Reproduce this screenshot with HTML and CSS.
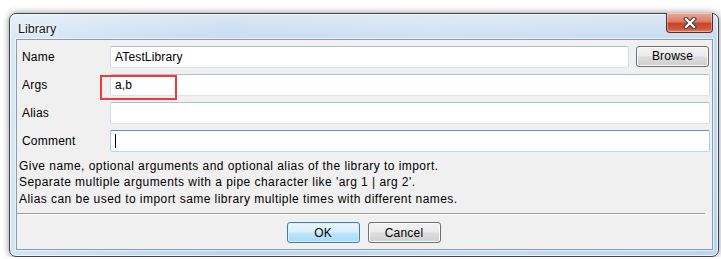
FILE: index.html
```html
<!DOCTYPE html>
<html lang="en">
<head>
    <meta charset="UTF-8">
    <title>Library</title>
    <link rel="stylesheet" href="styles.css">
</head>
<body>
    <div class="window">
        <div class="titlebar">
            <span class="title">Library</span>
            <span class="close">
                <svg width="14" height="12" viewBox="0 0 14 12">
                    <path d="M3 2 L11 10 M11 2 L3 10" stroke="#3a3f48" stroke-width="4.2" stroke-linecap="square" fill="none"/>
                    <path d="M3 2 L11 10 M11 2 L3 10" stroke="#ffffff" stroke-width="2.2" stroke-linecap="square" fill="none"/>
                </svg>
            </span>
        </div>
        <div class="client">
            <div class="form">
                <span class="label">Name</span>
                <div class="field">
                    <div class="textbox">ATestLibrary</div>
                    <span class="btn browse">Browse</span>
                </div>
                <span class="label">Args</span>
                <div class="field">
                    <div class="textbox">a,b</div>
                    <span class="mark"></span>
                </div>
                <span class="label">Alias</span>
                <div class="field">
                    <div class="textbox"></div>
                </div>
                <span class="label">Comment</span>
                <div class="field">
                    <div class="textbox focus"><span class="caret"></span></div>
                </div>
            </div>
            <div class="help">
                Give name, optional arguments and optional alias of the library to import.<br>
                Separate multiple arguments with a pipe character like 'arg 1 | arg 2'.<br>
                Alias can be used to import same library multiple times with different names.
            </div>
            <div class="sep"></div>
            <div class="buttons">
                <span class="btn default">OK</span>
                <span class="btn">Cancel</span>
            </div>
        </div>
    </div>
</body>
</html>
```

FILE: styles.css
```css
*{
    margin: 0;
    padding: 0;
    box-sizing: border-box;
}
body{
    background-color: #ffffff;
    font-family: "Liberation Sans", Arial, sans-serif;
    font-size: 12px;
    color: #000000;
}
.window{
    width: 710px;
    height: 244px;
    margin: 13px 0 0 9px;
    border: 1px solid #3d4550;
    border-radius: 7px;
    padding: 0 5px 6px 6px;
    display: flex;
    flex-direction: column;
    background: linear-gradient(90deg, rgba(255,255,255,0.35) 0, rgba(255,255,255,0) 30%, rgba(255,255,255,0.15) 60%, rgba(255,255,255,0) 100%),
                linear-gradient(180deg, #dbe8f6 0, #c6dbf0 26px, #bcd6f0 100%);
    box-shadow: 0 0 7px rgba(0,0,0,0.45), inset 0 0 0 1px rgba(255,255,255,0.7);
}
.titlebar{
    height: 26px;
    display: flex;
    align-items: flex-start;
    justify-content: space-between;
}
.title{
    margin: 8px 0 0 2px;
    font-size: 12.5px;
    color: #101820;
    text-shadow: 0 0 6px #ffffff, 0 0 3px #ffffff;
}
.close{
    width: 47px;
    height: 20px;
    margin-top: -1px;
    border: 1px solid #5b2b25;
    border-top: none;
    border-radius: 0 0 4px 4px;
    background: linear-gradient(180deg, #e9a99a 0, #db7d66 45%, #c8432a 55%, #d0573c 85%, #e08a6c 100%);
    box-shadow: inset 0 0 0 1px rgba(255,255,255,0.35);
    display: flex;
    align-items: center;
    justify-content: center;
}
.client{
    flex: 1;
    border: 1px solid #8b9cb0;
    background-color: #f0f0f0;
    box-shadow: 0 0 0 1px rgba(255,255,255,0.55);
    padding: 6px 2px 6px 0;
    display: flex;
    flex-direction: column;
}
.form{
    display: grid;
    grid-template-columns: 88px 1fr;
    grid-auto-rows: 22px;
    row-gap: 6px;
    padding-left: 5px;
}
.label{
    display: flex;
    align-items: center;
    letter-spacing: 0.2px;
}
.field{
    display: flex;
    gap: 7px;
    position: relative;
}
.textbox{
    flex: 1;
    height: 22px;
    background-color: #ffffff;
    border: 1px solid;
    border-color: #abc0d6 #cfdbe8 #d9e4ef #cfdbe8;
    border-radius: 2px;
    padding-left: 4px;
    display: flex;
    align-items: center;
    letter-spacing: 0.15px;
}
.textbox.focus{
    border-color: #5b93c5 #a9c9e4 #bcd8ee #a9c9e4;
}
.caret{
    width: 1px;
    height: 14px;
    background-color: #000000;
}
.mark{
    position: absolute;
    left: -10px;
    top: 1px;
    width: 77px;
    height: 25px;
    border: 2px solid #ef3a3a;
}
.btn{
    width: 73px;
    height: 21px;
    border: 1px solid #707070;
    border-radius: 3px;
    background: linear-gradient(180deg, #f2f2f2 0, #ebebeb 48%, #dddddd 52%, #cfcfcf 100%);
    box-shadow: inset 0 0 0 1px #fbfbfb;
    display: flex;
    align-items: center;
    justify-content: center;
    letter-spacing: 0.2px;
}
.browse{
    margin-right: 1px;
}
.btn.default{
    border-color: #3c7fb1;
    background: linear-gradient(180deg, #eaf6fd 0, #d9f0fc 48%, #bee6fd 52%, #a7d9f5 100%);
    box-shadow: inset 0 0 0 1px #d8eefb;
}
.help{
    margin-top: 6px;
    padding-left: 2px;
    line-height: 16.5px;
    letter-spacing: 0.45px;
}
.sep{
    height: 2px;
    margin: 6px 5px 0 0;
    border-top: 1px solid #a0a0a0;
    border-bottom: 1px solid #ffffff;
}
.buttons{
    margin-top: 7px;
    display: flex;
    justify-content: center;
    gap: 8px;
}
```
